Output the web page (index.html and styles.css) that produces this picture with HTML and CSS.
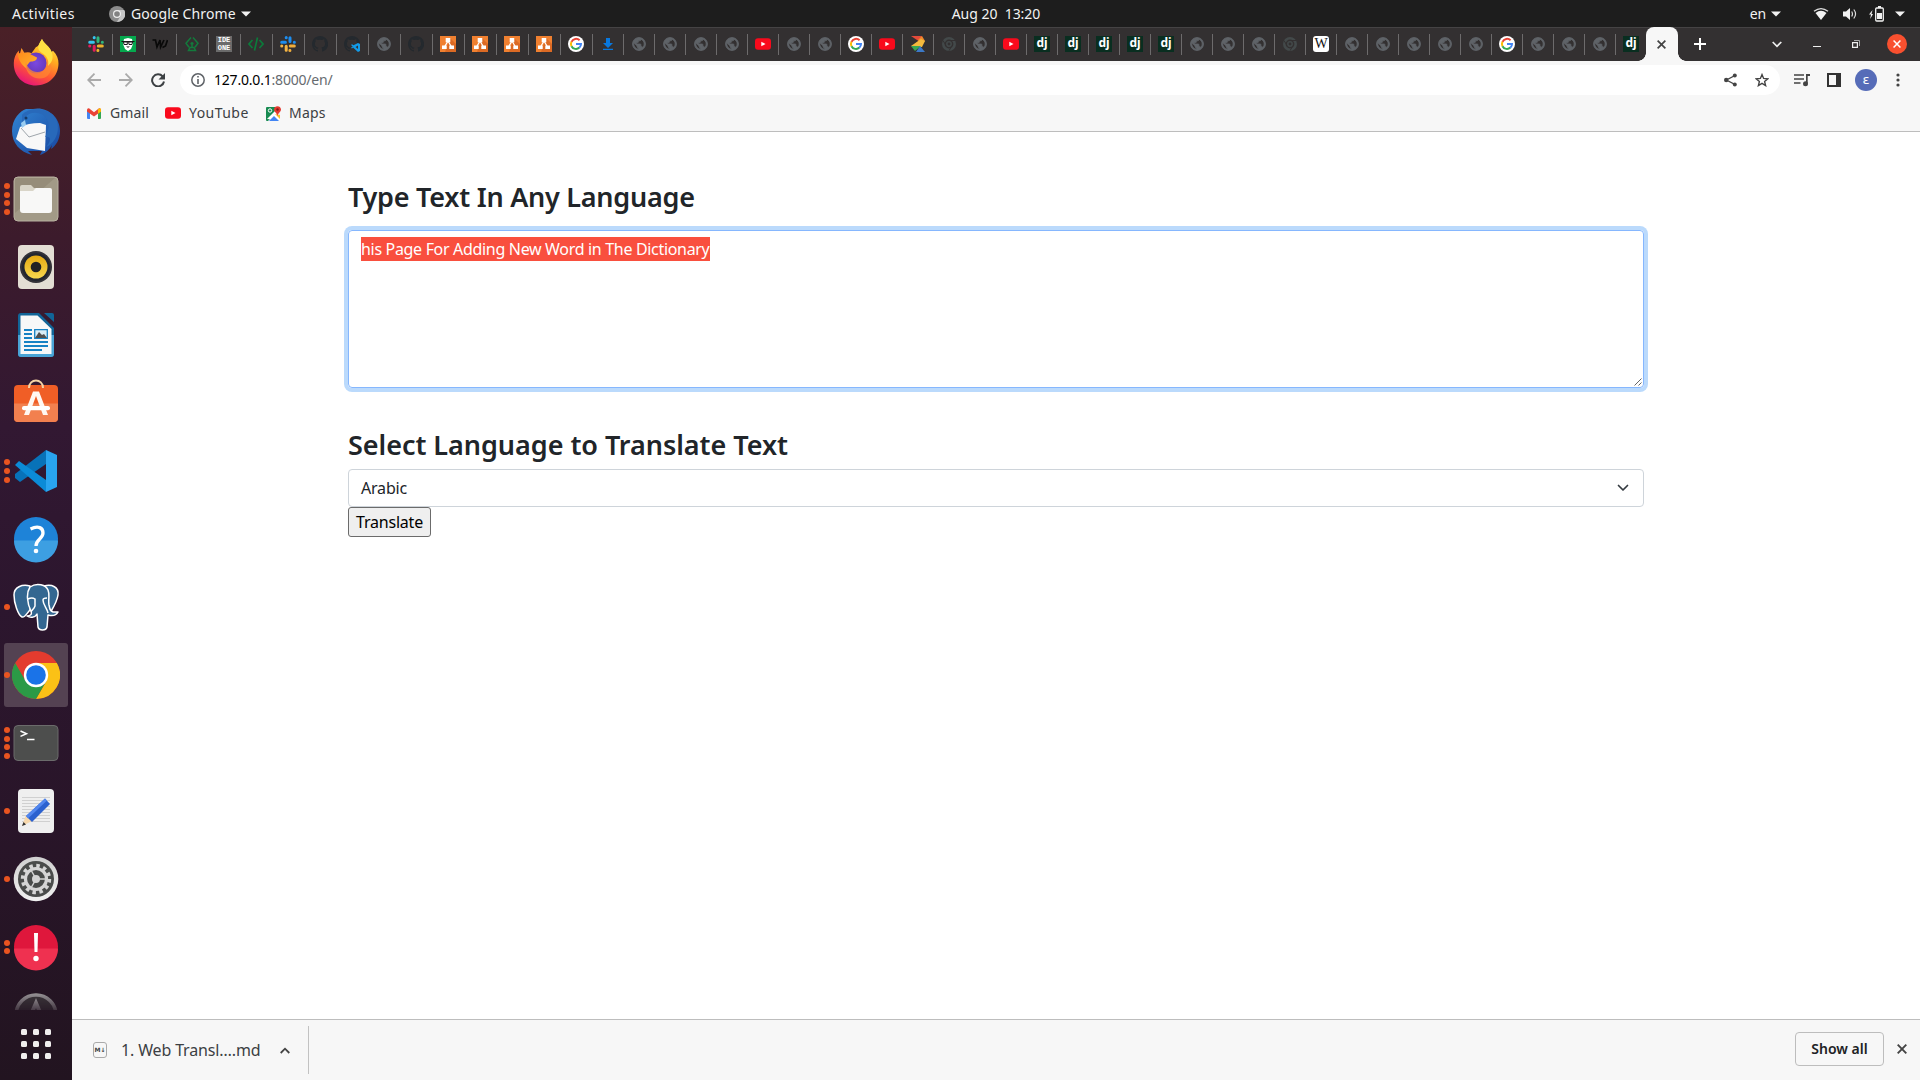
FILE: index.html
```html
<!DOCTYPE html>
<html lang="en">
<head>
<meta charset="utf-8">
<title>Translate</title>
<link rel="stylesheet" href="styles.css">
</head>
<body>
<svg class="defs" width="0" height="0">
  <defs>
    <linearGradient id="ffBody" x1=".8" y1="0" x2=".3" y2="1"><stop offset="0" stop-color="#fff14a"/><stop offset=".35" stop-color="#ffab20"/><stop offset=".68" stop-color="#ff5634"/><stop offset="1" stop-color="#e5127c"/></linearGradient>
    <linearGradient id="ffHead" x1="0" y1="0" x2="1" y2="1"><stop offset="0" stop-color="#ff8a1c"/><stop offset="1" stop-color="#ffb62b"/></linearGradient>
    <radialGradient id="ffGlobe"><stop offset="0" stop-color="#7b49e0"/><stop offset="1" stop-color="#6739bd"/></radialGradient>
    <linearGradient id="tb" x1="0" y1="0" x2="1" y2="1"><stop offset="0" stop-color="#3286d4"/><stop offset="1" stop-color="#1846a0"/></linearGradient>
    <linearGradient id="gold" x1="0" y1="0" x2="0" y2="1"><stop offset="0" stop-color="#e6aa12"/><stop offset="1" stop-color="#f6d74e"/></linearGradient>
    <linearGradient id="silver" x1="0" y1="0" x2="0" y2="1"><stop offset="0" stop-color="#cfcfcf"/><stop offset="1" stop-color="#f1f1f1"/></linearGradient>
  </defs>
  <symbol id="slack" viewBox="0 0 16 16">
    <g stroke-width="3" stroke-linecap="round" fill="none"><path class="sl-a" d="M1.7 6.2h3.7M6.2 1.6v.2"/><path class="sl-b" d="M10 1.7v3.7M14.3 6.2h.1"/><path class="sl-c" d="M10.3 10h4M9.9 14.3v.1"/><path class="sl-d" d="M6.2 10.3v4M1.7 10h.1"/></g>
  </symbol>
  <symbol id="beard" viewBox="0 0 16 16"><path fill="#05a94e" d="M0 0h16v16H0z"/><path fill="#fff" d="M4 3l4-1 4 1 1 5-2 5-3 2-3-2-2-5z"/><path fill="none" stroke="#181818" d="M1.5 5.5h13M3.5 6h3.8v2.5H4zM8.7 6h3.8L12 8.500H9z"/><path d="M6 10.500h4l-2 1.300z"/></symbol>
  <symbol id="wu" viewBox="0 0 16 16"><path fill="none" stroke="#090909" stroke-width="1.700" d="M.5 4h3l1.500 7 3-7 .6 7L12 4m3.500 0-2 6-3 1.500"/></symbol>
  <symbol id="diamond" viewBox="0 0 16 16"><path fill="none" stroke="#137a3c" stroke-width="1.500" d="M7 1.500 2 7.200l3 4M9 1.500l5 5.700-3 4M8 9v3M4.500 14.500h7L10 11.500H6z"/><circle cx="8" cy="7.500" r="1.600" fill="#137a3c"/></symbol>
  <symbol id="code" viewBox="0 0 16 16"><path fill="none" stroke="#0c7a3a" stroke-width="1.700" d="M4.500 4 1 8l3.500 4M11.500 4 15 8l-3.500 4M9.500 1.500l-3 13"/></symbol>
  <symbol id="github" viewBox="0 0 16 16"><path fill="#24292e" d="M8 0C3.600 0 0 3.600 0 8c0 3.500 2.300 6.500 5.500 7.600.4.100.5-.2.500-.4v-1.400c-2.200.5-2.700-1-2.700-1-.4-.9-.9-1.200-.9-1.200-.7-.5.100-.5.100-.5.800.1 1.200.8 1.200.8.700 1.300 1.900.9 2.300.7.100-.5.300-.9.500-1.100-1.800-.2-3.600-.9-3.600-4 0-.9.300-1.600.8-2.100-.1-.2-.4-1 .1-2.100 0 0 .7-.2 2.200.8a7.600 7.600 0 0 1 4 0c1.500-1 2.200-.8 2.200-.8.400 1.100.2 1.900.1 2.100.5.600.8 1.300.8 2.100 0 3.100-1.900 3.700-3.700 3.900.3.300.6.800.6 1.500v2.300c0 .2.100.5.600.4A8 8 0 0 0 8 0z"/></symbol>
  <symbol id="ghcode" viewBox="0 0 16 16"><use href="#github"/><path fill="#333031" d="M7 7h9v9H8z"/><path fill="#139be8" d="m14 7 2 1v7l-2 1-5-4.500L8 12.500l-1-.7 1.700-1.300L7 9l1-.7 1.500 1zm0 2.500L11.500 11l2.500 2z"/></symbol>
  <symbol id="globe" viewBox="0 0 16 16"><path transform="translate(.2 .2) scale(.65)" fill="#5f6368" stroke="#5f6368" stroke-width="1.200" d="M12 2C6.480 2 2 6.480 2 12s4.480 10 10 10 10-4.480 10-10S17.520 2 12 2zm-1 17.930c-3.950-.49-7-3.850-7-7.930 0-.62.080-1.210.210-1.790L9 15v1c0 1.100.9 2 2 2v1.930zm6.900-2.540c-.26-.81-1-1.390-1.900-1.390h-1v-3c0-.55-.45-1-1-1H8v-2h2c.55 0 1-.45 1-1V7h2c1.100 0 2-.9 2-2v-.41c2.930 1.190 5 4.060 5 7.410 0 2.080-.8 3.970-2.100 5.390z"/></symbol>
  <symbol id="drawio" viewBox="0 0 16 16"><path fill="#f08030" d="M0 0h16v16H0z"/><path fill="#dc6a24" d="M10 2l6 6v8H5z"/><path stroke="#fff" stroke-width="1.300" d="M8 5 4.500 11M8 5l3.500 6"/><path fill="#fff" d="M5.700 2h4.600v4.300H5.700zM2 9.500h4.700V13H2zM9.300 9.500H14V13H9.300z"/></symbol>
  <symbol id="google" viewBox="0 0 16 16"><circle cx="8" cy="8" r="8" fill="#fff"/><g fill="none" stroke-width="2"><path stroke="#ea4335" d="M11.600 4.300A5 5 0 0 0 3.500 5.800"/><path stroke="#fbbc05" d="M3.500 5.700a5 5 0 0 0 0 4.600"/><path stroke="#34a853" d="M3.500 10.200a5 5 0 0 0 7.900 1.400"/><path stroke="#4285f4" d="M8 8h5a5 5 0 0 1-1.700 3.700"/></g></symbol>
  <symbol id="download" viewBox="0 0 16 16"><path fill="#0878df" d="M6 2h4v5h3l-5 5-5-5h3zM3 12.700h10V14H3z"/></symbol>
  <symbol id="youtube" viewBox="0 0 16 16"><rect y="2.200" width="16" height="11.600" rx="3" fill="#f90a1c"/><path fill="#fff" d="m6.300 5.700 4.200 2.300-4.200 2.300z"/></symbol>
  <symbol id="zed" viewBox="0 0 16 16"><path fill="#e34a3a" d="M1 0h11l-2 6z"/><path fill="#f08a2c" d="M12 0l3 5-4 3-3-4z"/><path fill="#f4b93d" d="M11 3l-10 7 3 1h8l3-6z"/><path fill="#39a852" d="M1 10h10l-6 5z"/><path fill="#3c79c8" d="M10 10l5 6H6z"/></symbol>
  <symbol id="chromegray" viewBox="0 0 16 16"><g fill="none" stroke="#43494a"><circle cx="8" cy="8" r="5.700" stroke-width="2.600"/><circle cx="8" cy="8" r="2.200" stroke-width="1.500"/></g><path fill="none" stroke="#333031" d="M8 4.500h6M5 9.500 2 4.500M11 9.700l-3 5"/></symbol>
  <symbol id="chrome" viewBox="0 0 48 48"><circle cx="24" cy="24" r="24" fill="#e33b2e"/><path fill="#fbc116" d="M24 12h20.800A24 24 0 0 1 24 48l10.400-18z"/><path fill="#2b9a46" d="M3.200 12A24 24 0 0 0 24 48l10.400-18H13.600z"/><circle cx="24" cy="24" r="12.200" fill="#fff"/><circle cx="24" cy="24" r="9.800" fill="#1a73e8"/></symbol>
  <symbol id="caret" viewBox="0 0 10 6"><path fill="#f2f2f2" d="M0 .5h10L5 5.500z"/></symbol>
  <symbol id="close" viewBox="0 0 10 10"><path fill="none" stroke="currentColor" stroke-width="1.900" d="m.7.7 8.600 8.600M9.300.7.700 9.300"/></symbol>
</svg>

<header class="topbar">
  <span class="activities">Activities</span>
  <span class="app-menu"><svg width="16" height="16" viewBox="0 0 16 16"><circle cx="8" cy="8" r="8" fill="#8c8c8c"/><path fill="#c6c6c6" d="M8 4h7.200A8 8 0 0 1 8 16l3.600-6z"/><circle cx="8" cy="8" r="4" fill="#eee"/><circle cx="8" cy="8" r="2.800" fill="#828282"/></svg><span class="app-name">Google Chrome</span><svg width="10" height="6"><use href="#caret"/></svg></span>
  <span class="clock">Aug 20&nbsp; 13:20</span>
  <span class="status">
    <span class="lang">en</span><svg class="lang-caret" width="10" height="6"><use href="#caret"/></svg>
    <svg class="wifi" width="16" height="14" viewBox="0 0 16 14"><path fill="none" stroke="#ddd" stroke-width="1.300" d="M1 4.300Q8-1.200 15 4.300"/><path fill="#f2f2f2" d="M2.500 6Q8 1.600 13.500 6L8 13z"/></svg>
    <svg class="sound" width="16" height="14" viewBox="0 0 16 14"><path fill="#f2f2f2" d="M1 4.500h3L8 1v12L4 9.500H1z"/><path fill="none" stroke="#ddd" stroke-width="1.200" d="M9.700 4.500q1.500 2.500 0 5M11.800 2.500q3.500 4.500 0 9"/></svg>
    <svg class="battery" width="15" height="16" viewBox="0 0 15 16"><path fill="#f2f2f2" d="M3.500 4 0 8.500h2L1.200 13 4 8H2.500zM9 0h3v2H9zM8 7h5v6H8z"/><rect x="6.700" y="2" width="7.600" height="13" rx="1" fill="none" stroke="#f2f2f2" stroke-width="1.300"/></svg>
    <svg width="10" height="6"><use href="#caret"/></svg>
  </span>
</header>

<div class="desktop">
  <nav class="dock">
    <ul class="dock-list">
      <li><svg width="48" height="48" viewBox="0 0 48 48"><path fill="url(#ffBody)" d="M24 46.500C11 46.500 1.500 37 1.800 24c.1-5 1.700-9 5-12.500 0 2 .3 2.900 1 3.600L9.500 9l3 5c2-.9 5-.9 7 .2L24 8c3-.8 3-3 6-8 1.500 5 7 6.500 9.500 13l1.500-1.200c4 4 5.600 8 5.500 13C46.200 37.500 36.500 46.500 24 46.500z"/><circle cx="24" cy="24" r="10.500" fill="url(#ffGlobe)"/><path fill="url(#ffHead)" d="M6 15c2-1.500 8-2 12 0l7 3.500c0 3-3 4-7 4.200-2.500 3-4 4-3 7C9 26 6 20 6 15z"/><path fill="#ff8532" d="M14 22c1 9 9 13 16 10 5-2 7-7 4-12 5 3 7 10 3 15-4 6-14 6-20 0-3-4-4-8-3-13z" opacity=".75"/><path fill="#ffe143" d="M30 0c2 5 8 7 10 14 2 6-1 10-4 13 1-6-1-10-6-13-5-3-5-7 0-14z"/></svg></li>
      <li><svg width="48" height="48" viewBox="0 0 48 48"><path fill="url(#tb)" d="M14 2l7 0C34-1 48 9 48 24c0 8-4 15-9 18l1-4c-3 5-6 8-12 10l2-4H16l4 4C8 45 0 36 0 24 0 12 8 4 14 2z"/><path fill="#f8f8f8" d="M8 20q8-4 20-4l6 2-1 26-18-3-11-9z"/><path fill="none" stroke="#9ea5ab" d="m9 21 8 9 16-5"/><path fill="#2869ba" d="M10 18C12 6 22 3 31 8c6 4 8 12 2 22 7-1 6 4 1 10 12-5 16-23 7-32C33 1 17 0 10 8z"/><path fill="#9acdf1" d="m9 16 4-3 1 5-4 3z"/><circle cx="14" cy="11" r="1.500" fill="#153968"/></svg></li>
      <li><span class="dots"><i></i><i></i><i></i><i></i></span><svg width="48" height="48" viewBox="0 0 48 48"><rect x="2" y="2" width="44" height="44" rx="4" fill="#a29a87" stroke="#b9b2a1"/><path fill="#8e8572" d="M3 5q0-2 2-2h38L3 38z" opacity=".6"/><path fill="#d9d5c8" d="M8 12q0-2 2-2h9l3 3h16v8H8z"/><path fill="#f8f8f7" d="M8 16h13l3-3h14q2 0 2 2v20q0 3-3 3H11q-3 0-3-3z"/></svg></li>
      <li><svg width="48" height="48" viewBox="0 0 48 48"><rect x="6" y="2" width="36" height="44" rx="4" fill="#e3ded4"/><circle cx="24" cy="24" r="16" fill="#333238"/><circle cx="24" cy="24" r="14" fill="#22262f"/><circle cx="24" cy="24" r="11.500" fill="url(#gold)"/><circle cx="24" cy="24" r="5.300" fill="#202124"/></svg></li>
      <li><svg width="48" height="48" viewBox="0 0 48 48"><path fill="#116598" d="M9 2h18l15 15v26q0 3-3 3H9q-3 0-3-3V5q0-3 3-3zm23 0h8q2 0 2 2v7z"/><path fill="#49a4d6" d="M6 24h36v19q0 3-3 3H9q-3 0-3-3z"/><path fill="#f7f8f8" d="M8.500 4.500h17L39.500 18v25h-31z"/><path stroke="#1682c4" stroke-width="2" d="M12 19h8M12 23h8M12 27h8M12 31h24M12 35h24M12 39h18"/><path fill="#d9edf7" stroke="#1682c4" stroke-width="1.300" d="M22.700 18.700h12.600v8.600H22.700z"/><path fill="#505050" d="m23 27 4-6 3 3 2-1 3 4z"/></svg></li>
      <li><svg width="48" height="48" viewBox="0 0 48 48"><rect x="2" y="6" width="44" height="37" rx="4" fill="#f05e26"/><path fill="#f2804f" d="M2 24.500h44V39q0 4-4 4H6q-4 0-4-4z"/><path fill="none" stroke="#f5d3a5" stroke-width="2" d="M17 9c0-10 14-10 14 0"/><path fill="#fff8f2" d="M21 12.500h6L36 36h-5l-7-19-7 19h-5z"/><rect x="10" y="27" width="28" height="4.300" rx="2" fill="#fff"/></svg></li>
      <li><span class="dots"><i></i><i></i><i></i></span><svg width="48" height="48" viewBox="0 0 48 48"><path fill="#0872b8" d="M34 3v14L8 35l-5-4v-4z"/><path fill="#0b8bd7" d="m3 18 4-4 27 19v12z"/><path fill="#29a4ef" d="m34 3 11 5v32l-11 5z"/></svg></li>
      <li><svg width="48" height="48" viewBox="0 0 48 48"><circle cx="24" cy="24" r="22" fill="#1e83d8"/><path fill="#3d9fe2" d="M2 25.500h44a22 22 0 0 1-44 0z"/><path fill="none" stroke="#fff" stroke-width="3.300" d="M18.500 14c8-4 12.500-1 12.500 4 0 6-7 6-7 13"/><circle cx="24" cy="36" r="2.300" fill="#fff"/></svg></li>
      <li><span class="dots"><i></i></span><svg width="48" height="48" viewBox="0 0 48 48"><g fill="#336791" stroke="#fff" stroke-width="1.500" stroke-linejoin="round"><path d="M18 3C10 1 2 4 2 12c0 8 4 20 8 22 3 1 5-4 8-7z"/><path d="M32 3c8-2 15 1 14 9-1 7-5 13-8 18l-5-3z"/><path d="M18 4c7-5 16-2 18 3 2 5 0 10 1 15 1 3 0 6 4 7h5c-2 4-6 4-10 3l-1 12c-1 4-8 4-9 0l-1-13c-2 4-7 4-10 2 4 0 5-2 4-5-4-8-5-18-1-24z"/></g><path fill="none" stroke="#fff" stroke-width="1.500" d="M16 16q4-2 7 0v7c-1 3-3 4-4 6M35 15q-4 0-4 2c0 5 4 8 5 13"/></svg></li>
      <li class="active"><span class="dots"><i></i></span><svg width="48" height="48"><use href="#chrome"/></svg></li>
      <li><span class="dots"><i></i><i></i><i></i><i></i></span><svg width="48" height="48" viewBox="0 0 48 48"><rect x="2" y="6.500" width="44" height="35" rx="4" fill="#4d4e4d" stroke="#6b6b6b"/><path fill="none" stroke="#fff" stroke-width="1.500" d="m8.500 12 6 2.700-6 2.700M15 20.500h7.500"/></svg></li>
      <li><span class="dots"><i></i></span><svg width="48" height="48" viewBox="0 0 48 48"><rect x="6" y="2" width="36" height="44" rx="4" fill="#efefef"/><path stroke="#d0d0d0" d="M10 10.500h28M10 13.500h28M10 16.500h28M10 19.500h28M10 22.500h28M10 25.500h28M10 28.500h28M10 31.500h28M10 34.500h28"/><path fill="#f7d8ac" d="m10 39 4-11 6 6z"/><path fill="#333" d="m10 39 1.500-4 2.500 2.500z"/><path fill="#2b61cf" d="M33 11.500 38 17 20 35l-6-6z"/><path fill="#5186ee" d="m33 11.500 2 2-19 18-2-2.500z"/></svg></li>
      <li><span class="dots"><i></i></span><svg width="48" height="48" viewBox="0 0 48 48"><circle cx="24" cy="24" r="22.300" fill="url(#silver)"/><circle cx="24" cy="24" r="18" fill="#4a4c4b"/><g fill="none" stroke="#d5d5d5"><circle cx="24" cy="24" r="13.200" stroke-width="4" stroke-dasharray="3.450 3.450"/><circle cx="24" cy="24" r="10.500" stroke-width="3.200"/><path stroke-width="1.500" d="m24 24 10 0M24 24l-5-9M24 24l-5 9"/></g><circle cx="24" cy="24" r="4" fill="#d5d5d5"/></svg></li>
      <li><span class="dots"><i></i><i></i></span><svg width="48" height="48" viewBox="0 0 48 48"><circle cx="24" cy="24" r="22" fill="#df173c"/><path fill="#ef3150" d="M2 25.500h44a22 22 0 0 1-44 0z"/><path fill="#fff" d="M22 10h4l-.5 19h-3z"/><circle cx="24" cy="35.500" r="2.700" fill="#fff"/></svg></li>
      <li><svg class="faded" width="48" height="48" viewBox="0 0 48 48"><circle cx="24" cy="24" r="21.500" fill="#3e3b3d"/><circle cx="24" cy="24" r="20" fill="none" stroke="#a2a0a1" stroke-width="3.500"/><path fill="none" stroke="#b5b3b4" stroke-width="4" d="m18 26 6-14 6 14"/></svg></li>
    </ul>
    <div class="apps"><b></b><b></b><b></b><b></b><b></b><b></b><b></b><b></b><b></b></div>
  </nav>

  <section class="browser">
    <div class="tabstrip">
      <div class="tabs wide">
        <span><svg class="slack"><use href="#slack"/></svg></span><span><svg><use href="#beard"/></svg></span><span><svg><use href="#wu"/></svg></span><span><svg><use href="#diamond"/></svg></span><span><em class="ideone">IDE<br>ONE</em></span><span><svg><use href="#code"/></svg></span><span><svg class="slack blue"><use href="#slack"/></svg></span><span><svg><use href="#github"/></svg></span><span><svg><use href="#ghcode"/></svg></span><span><svg><use href="#globe"/></svg></span><span><svg><use href="#github"/></svg></span><span><svg><use href="#drawio"/></svg></span><span><svg><use href="#drawio"/></svg></span><span><svg><use href="#drawio"/></svg></span><span><svg><use href="#drawio"/></svg></span><span><svg><use href="#google"/></svg></span>
      </div>
      <div class="tabs">
        <span><svg><use href="#download"/></svg></span><span><svg><use href="#globe"/></svg></span><span><svg><use href="#globe"/></svg></span><span><svg><use href="#globe"/></svg></span><span><svg><use href="#globe"/></svg></span><span><svg><use href="#youtube"/></svg></span><span><svg><use href="#globe"/></svg></span><span><svg><use href="#globe"/></svg></span><span><svg><use href="#google"/></svg></span><span><svg><use href="#youtube"/></svg></span><span><svg><use href="#zed"/></svg></span><span><svg><use href="#chromegray"/></svg></span><span><svg><use href="#globe"/></svg></span><span><svg><use href="#youtube"/></svg></span><span><em class="dj">dj</em></span><span><em class="dj">dj</em></span><span><em class="dj">dj</em></span><span><em class="dj">dj</em></span><span><em class="dj">dj</em></span><span><svg><use href="#globe"/></svg></span><span><svg><use href="#globe"/></svg></span><span><svg><use href="#globe"/></svg></span><span><svg><use href="#chromegray"/></svg></span><span><em class="wiki">W</em></span><span><svg><use href="#globe"/></svg></span><span><svg><use href="#globe"/></svg></span><span><svg><use href="#globe"/></svg></span><span><svg><use href="#globe"/></svg></span><span><svg><use href="#globe"/></svg></span><span><svg><use href="#google"/></svg></span><span><svg><use href="#globe"/></svg></span><span><svg><use href="#globe"/></svg></span><span><svg><use href="#globe"/></svg></span><span class="last"><em class="dj">dj</em></span>
      </div>
      <div class="tab-active"><svg width="9" height="9"><use href="#close"/></svg></div>
      <svg class="newtab" width="12" height="12" viewBox="0 0 12 12"><path stroke="#fff" stroke-width="2" d="M6 0v12M0 6h12"/></svg>
      <div class="window-controls">
        <svg width="10" height="7" viewBox="0 0 10 7"><path fill="none" stroke="#eee" stroke-width="1.700" d="m.7 1 4.300 4.300L9.300 1"/></svg>
        <svg width="8" height="6" viewBox="0 0 8 6"><path fill="#eee" d="M0 5h8v1H0z"/></svg>
        <svg width="8" height="8" viewBox="0 0 8 8"><path fill="none" stroke="#eee" stroke-width="1.200" d="M.6 2.600h4.800v4.800H.6z"/><path fill="none" stroke="#aaa" d="M2 .5h5.500V6"/></svg>
        <span class="win-close"><svg width="8" height="8"><use href="#close"/></svg></span>
      </div>
    </div>

    <div class="toolbar">
      <div class="nav-icons">
        <svg width="14" height="14" viewBox="0 0 14 14"><path fill="none" stroke="#aaa" stroke-width="1.800" d="M14 7H1.500M7.500.7 1.200 7l6.300 6.300"/></svg>
        <svg width="14" height="14" viewBox="0 0 14 14"><path fill="none" stroke="#aaa" stroke-width="1.800" d="M0 7h12.500M6.500.7 12.800 7l-6.300 6.300"/></svg>
        <svg width="14" height="14" viewBox="0 0 14 14"><path fill="none" stroke="#3c4043" stroke-width="2" d="M11.700 3.500A6 6 0 1 0 13 8.500"/><path fill="#3c4043" d="M14 0v6.500H7.500z"/></svg>
      </div>
      <div class="omnibox">
        <svg width="14" height="14" viewBox="0 0 14 14"><circle cx="7" cy="7" r="6.200" fill="none" stroke="#5f6368" stroke-width="1.500"/><path fill="#5f6368" d="M6.200 3h1.600v1.600H6.200zM6.200 6h1.600v5H6.200z"/></svg>
        <span class="url"><b>127.0.0.1</b>:8000/en/</span>
        <svg class="share" width="13" height="14" viewBox="0 0 13 14"><path fill="none" stroke="#444" stroke-width="1.400" d="M11 2.500 2.500 7l8.500 4.500"/><g fill="#444"><circle cx="10.800" cy="2.400" r="2"/><circle cx="2.200" cy="7" r="2.200"/><circle cx="10.800" cy="11.600" r="2"/></g></svg>
        <svg width="14" height="14" viewBox="0 0 14 14"><path fill="none" stroke="#444" stroke-width="1.400" stroke-linejoin="miter" d="m7 1.600 1.600 3.800 4.200.4-3.200 2.700 1 4.100L7 10.400l-3.600 2.200 1-4.100-3.200-2.700 4.200-.4z"/></svg>
      </div>
      <div class="actions">
        <svg width="16" height="14" viewBox="0 0 16 14"><path stroke="#444" stroke-width="1.700" d="M0 2h10M0 6h10M0 10h6.500"/><path fill="#444" d="M12 1h4v2h-2.300v7.500H12z"/><circle cx="11.500" cy="10.700" r="2.500" fill="#444"/></svg>
        <svg width="14" height="14" viewBox="0 0 14 14"><path fill="#333" d="M0 0h14v14H0z"/><path fill="#f7f7f7" d="M2 2h7v10H2z"/></svg>
        <span class="avatar">ε</span>
        <svg width="4" height="14" viewBox="0 0 4 14"><g fill="#444"><circle cx="2" cy="2" r="1.600"/><circle cx="2" cy="7" r="1.600"/><circle cx="2" cy="12" r="1.600"/></g></svg>
      </div>
    </div>

    <div class="bookmarks">
      <span class="gm"><svg width="14" height="11" viewBox="0 0 14 11"><path fill="#4285f4" d="M0 2h3v9H1q-1 0-1-1z"/><path fill="#34a853" d="M11 2h3v8q0 1-1 1h-2z"/><path fill="#ea4335" d="M0 2Q0 0 2 .3l5 4 5-4q2-.3 2 1.700v1.500L7 8.500 0 3.500z"/><path fill="#fbbc04" d="M11 1.200Q14-.8 14 2v1.500l-3 2.200z"/></svg><span>Gmail</span></span>
      <span class="yt"><svg width="16" height="16"><use href="#youtube"/></svg><span>YouTube</span></span>
      <span class="mp"><svg width="15" height="15" viewBox="0 0 15 15"><path fill="#e8eaed" d="M1 2h13v12H1z"/><path fill="#188b51" d="M1 1h9v6l-8 8H1q-1 0-1-1V2q0-1 1-1z"/><path fill="#fff" d="M1 13 9 5l5 5v4z"/><path fill="#4285f4" d="m3 15 5-5 5 5z"/><path fill="#fbc02d" d="m9 8 5 5V9z"/><circle cx="4" cy="4.500" r="1.700" fill="none" stroke="#fff"/><path fill="#e53a30" d="M8 3.500C8-1 15-1 15 3.500 15 6 12 7 11.500 10 11 7 8 6 8 3.500z"/><circle cx="11.500" cy="3.500" r="1.200" fill="#851c19"/></svg><span>Maps</span></span>
    </div>

    <main class="page">
      <h3 class="title first">Type Text In Any Language</h3>
      <div class="textarea"><span class="selected">his Page For Adding New Word in The Dictionary</span><svg class="grip" width="8" height="8" viewBox="0 0 8 8"><path stroke="#555" stroke-width=".9" d="m.5 7.500 7-7m-3 7 3-3"/></svg></div>
      <h3 class="title second">Select Language to Translate Text</h3>
      <div class="select"><span>Arabic</span><svg width="12" height="8" viewBox="0 0 12 8"><path fill="none" stroke="#343a40" stroke-width="1.700" stroke-linecap="round" stroke-linejoin="round" d="m1.500 1.500 4.500 4.500 4.500-4.500"/></svg></div>
      <button class="translate">Translate</button>
    </main>

    <footer class="shelf">
      <div class="download"><span class="md-icon">M↓</span><span class="file">1. Web Transl….md</span><svg width="10" height="7" viewBox="0 0 10 7"><path fill="none" stroke="#444" stroke-width="1.800" d="M.7 6 5 1.700 9.300 6"/></svg></div>
      <button class="show-all"><span>Show all</span></button>
      <svg class="shelf-close" width="10" height="10"><use href="#close"/></svg>
    </footer>
  </section>
</div>
</body>
</html>
```
FILE: styles.css
```css
* { box-sizing: border-box; }
body { margin: 0; width: 1920px; height: 1080px; overflow: hidden; display: flex; flex-direction: column; background: #fff; font-family: "Noto Sans", sans-serif; font-size: 14px; }
svg { display: block; flex: none; }
.defs { position: absolute; }
span { white-space: nowrap; }

.topbar { height: 27px; flex: none; background: #1d1d1d; color: #f2f2f2; display: grid; grid-template-columns: 1fr auto 1fr; grid-template-areas: "left clock status"; align-items: center; padding: 0 15px 0 12px; font-size: 14px; line-height: 26px; }
.activities { grid-area: left; letter-spacing: .45px; }
.app-menu { grid-area: left; display: flex; align-items: center; margin-left: 97px; }
.app-name { margin: 0 5px 0 6px; letter-spacing: .1px; }
.clock { grid-area: clock; margin-left: 75px; letter-spacing: -.02px; }
.status { grid-area: status; display: flex; align-items: center; justify-content: flex-end; }
.lang { letter-spacing: -.2px; }
.lang-caret { margin: 0 32px 0 5px; }
.wifi { margin-right: 13px; }
.sound { margin-right: 11px; }
.battery { margin-right: 11px; }

.desktop { flex: 1; display: flex; min-height: 0; }
.dock { width: 72px; flex: none; padding-top: 2px; background: linear-gradient(#4a2027 0, #3c1b2c 20%, #321832 38%, #2c162e 55%, #291529 75%, #221420 100%); }
.dock-list { list-style: none; margin: 0; padding: 0; height: 981px; overflow: hidden; }
.dock-list li { height: 68px; display: flex; align-items: center; position: relative; }
.dock-list li > svg { margin-left: 12px; }
.dock-list li.active { height: 64px; width: 64px; margin: 2px 4px; border-radius: 3px; background: #544252; }
.dock-list li.active > svg { margin-left: 8px; }
.dots { position: absolute; left: 4px; top: 0; height: 100%; display: flex; flex-direction: column; justify-content: center; gap: 2.700px; }
.active .dots { left: 0; }
.dots i { width: 6px; height: 6px; border-radius: 50%; background: #e95420; }
.faded { mask-image: linear-gradient(#000 0, rgba(0, 0, 0, .25) 19px); }
.apps { display: grid; grid-template-columns: repeat(3, 6px); gap: 6px; margin: 19px 0 0 21px; }
.apps b { width: 6px; height: 6px; border-radius: 1.500px; background: #f0eeee; }

.browser { flex: 1; min-width: 0; display: flex; flex-direction: column; background: #fff; }
.tabstrip { height: 34px; flex: none; display: flex; background: #333031; border-top: 1px solid #454344; padding-left: 9px; }
.tabs { display: flex; padding-top: 6px; align-items: flex-start; }
.tabs > span { width: 31px; height: 21px; padding: 2px 0 0 7px; display: flex; align-items: flex-start; border-right: 1px solid #6d6b6c; }
.tabs.wide > span { width: 32px; }
.tabs > .last { width: 30px; border: 0; }
.tabs svg, .tabs em { width: 16px; height: 16px; flex: none; font-style: normal; text-align: center; }
.slack { --a: #36c5f0; --b: #2eb67d; --c: #ecb22e; --d: #e01e5a; }
.slack.blue { --a: #1d8df0; --b: #1d8df0; --c: #f0ad3c; --d: #f5b545; }
.sl-a { stroke: var(--a); }
.sl-b { stroke: var(--b); }
.sl-c { stroke: var(--c); }
.sl-d { stroke: var(--d); }
.ideone { background: #6b6b6b; color: #fff; font: 700 7px/8px "Liberation Mono", monospace; }
.dj { background: #092e20; color: #fff; font: 700 12px/14px "Noto Sans", sans-serif; }
.wiki { background: #fff; border-radius: 3px; color: #111; font: 14px/16px "Liberation Serif", serif; }
.tab-active { width: 32px; height: 34px; margin-top: -1px; background: #f7f7f7; border-radius: 8px 8px 0 0; display: flex; align-items: center; justify-content: center; padding-right: 1px; color: #444; position: relative; }
.tab-active::before, .tab-active::after { content: ""; position: absolute; bottom: 0; width: 8px; height: 8px; }
.tab-active::before { right: 32px; background: radial-gradient(circle at 0 0, transparent 7.500px, #f7f7f7 8px); }
.tab-active::after { left: 32px; background: radial-gradient(circle at 100% 0, transparent 7.500px, #f7f7f7 8px); }
.newtab { margin: 10px 0 0 16px; }
.window-controls { margin-left: auto; display: flex; align-items: center; gap: 31px; padding-right: 13px; height: 32px; }
.win-close { margin-left: -4px; width: 20px; height: 20px; border-radius: 50%; background: #f9502f; color: #fff; display: flex; align-items: center; justify-content: center; }

.toolbar { height: 38px; flex: none; background: #f7f7f7; display: flex; align-items: center; padding-left: 15px; }
.nav-icons { display: flex; gap: 18px; width: 93px; }
.omnibox { width: 1600px; height: 30px; border-radius: 15px; background: #fff; display: flex; align-items: center; padding: 0 11px; }
.url { margin-left: 9px; font-size: 14px; line-height: 30px; color: #666b70; letter-spacing: -.2px; }
.url b { font-weight: 400; color: #000; }
.share { margin: 0 18px 0 auto; }
.actions { display: flex; align-items: center; padding-left: 14px; }
.actions svg:nth-child(2) { margin: 0 14px 0 17px; }
.avatar { width: 22px; height: 22px; border-radius: 50%; background: #566cb8; color: #fff; font: 13px/21px "DejaVu Sans", sans-serif; text-align: center; margin-right: 19px; }
.bookmarks { height: 33px; flex: none; background: #f7f7f7; border-bottom: 1px solid #bdbdbd; display: flex; align-items: flex-start; padding-left: 15px; color: #3c4043; font-size: 14px; line-height: 28px; }
.bookmarks > span { display: flex; align-items: center; height: 28px; gap: 9px; }
.gm { width: 78px; }
.gm span { letter-spacing: .1px; }
.yt { width: 101px; }
.yt span { margin-left: -1px; letter-spacing: .45px; }
.mp span { margin-left: -1px; letter-spacing: .2px; }

.page { flex: 1; width: 1296px; margin: 0 auto; padding-top: 48px; color: #212529; font-size: 16px; }
.title { margin: 0; font-size: 27px; line-height: 34px; font-weight: 600; white-space: nowrap; }
.title.first { letter-spacing: -.25px; }
.title.second { letter-spacing: -.04px; }
.textarea { height: 158px; margin: 16px 0 40px; padding: 6px 12px; border: 1px solid #86b7fe; border-radius: 4px; box-shadow: 0 0 0 4px #bbdafc; position: relative; line-height: 24px; }
.selected { display: inline-block; height: 24px; width: 349px; background: #f94f3e; color: #fff; letter-spacing: -.32px; }
.grip { position: absolute; right: 1px; bottom: 1px; }
.select { height: 38px; margin-top: 7px; border: 1px solid #ced4da; border-radius: 4px; padding: 0 14px 0 12px; display: flex; justify-content: space-between; align-items: center; line-height: 36px; letter-spacing: -.2px; }
.translate { display: block; width: 83px; height: 30px; padding: 0; border: 1px solid #6b6b6b; border-radius: 3px; background: #efefef; color: #000; font: 16px/28px "Noto Sans", sans-serif; letter-spacing: -.2px; }

.shelf { height: 61px; flex: none; border-top: 1px solid #bdbdbd; background: #f7f7f7; display: flex; align-items: center; padding-right: 13px; color: #3c4043; }
.download { width: 237px; height: 48px; border-right: 1px solid #c2c2c2; display: flex; align-items: center; padding-left: 21px; font-size: 16px; }
.md-icon { width: 14px; height: 16px; border: 1px solid #aaa; border-radius: 3px; font: 700 6px/14px "DejaVu Sans", sans-serif; text-align: center; }
.file { width: 140px; margin: 0 19px 0 14px; letter-spacing: -.15px; }
.show-all { margin: 0 0 2px auto; width: 89px; height: 34px; border: 1px solid #bdbdbd; border-radius: 4px; background: #f7f7f7; padding: 0; font: 600 14px/30px "Noto Sans", sans-serif; color: #202124; }
.shelf-close { margin: 0 0 2px 13px; color: #444; }
```
